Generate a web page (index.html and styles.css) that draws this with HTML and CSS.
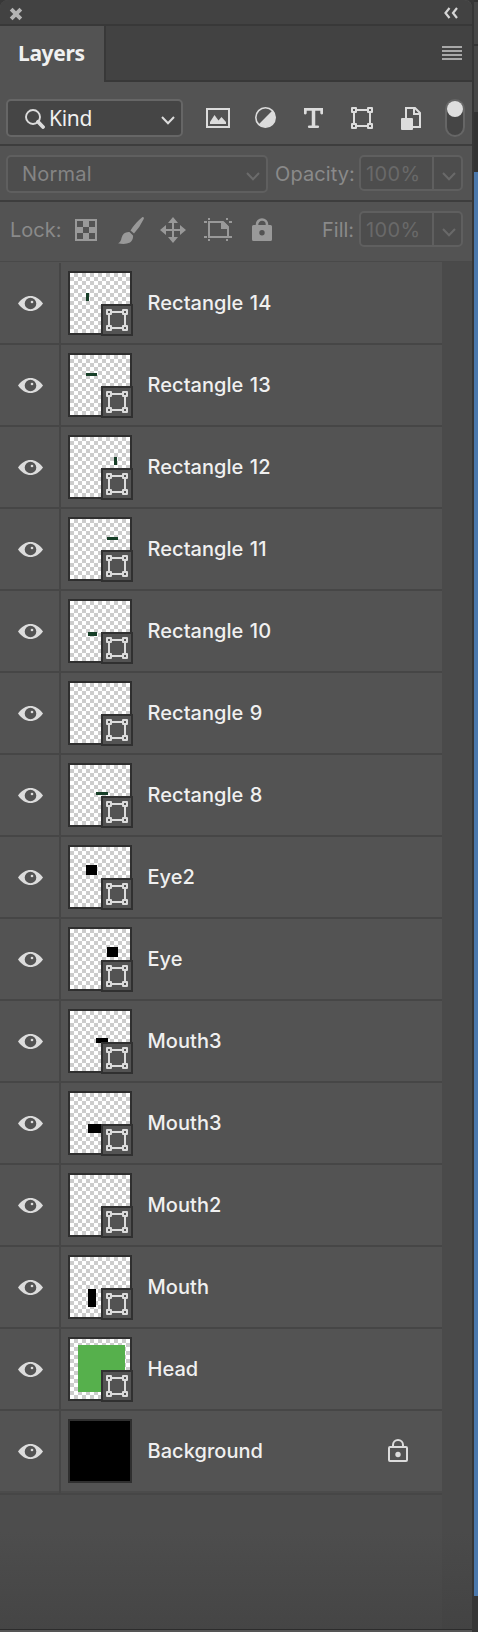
FILE: index.html
```
<!DOCTYPE html>
<html lang="en">
<head>
<meta charset="utf-8">
<title>Layers</title>
<link rel="stylesheet" href="styles.css">
</head>
<body>
<svg class="defs" aria-hidden="true">
  <symbol id="shape" viewBox="0 0 22 22"><path d="M5 3H17M5 19H17M3 5V17M19 5V17M1 1H5V5H1ZM17 1H21V5H17ZM1 17H5V21H1ZM17 17H21V21H17Z" fill="none" stroke="currentColor" stroke-width="2" stroke-linejoin="round"/></symbol>
  <symbol id="eye" viewBox="0 0 25 15"><path fill="currentColor" fill-rule="evenodd" d="M0 7.5C3.5 2.5 8 0 12.5 0S21.500 2.500 25 7.500C21.500 12.500 17 15 12.500 15S3.500 12.500 0 7.500ZM12.500 1.700A5.800 5.800 0 1 0 12.500 13.300A5.800 5.800 0 1 0 12.500 1.700Z"/><circle cx="14" cy="6" r="1.300" fill="currentColor"/></symbol>
  <symbol id="chevron" viewBox="0 0 14 9"><path d="M1 1L7 7.300L13 1" fill="none" stroke="currentColor" stroke-width="2"/></symbol>
</svg>
<div class="window">
<main class="panel">
  <header class="titlebar">
    <svg class="close" viewBox="0 0 13 13"><path d="M2 2L11 11M11 2L2 11" stroke="currentColor" stroke-width="3.600"/></svg>
    <svg class="collapse" viewBox="0 0 14 11"><path d="M5.500 .500L1.500 5.500L5.500 10.500M13 .500L9 5.500L13 10.500" fill="none" stroke="currentColor" stroke-width="2.200"/></svg>
  </header>
  <nav class="tabs">
    <div class="tab">Layers</div>
    <div class="menu"><i></i><i></i><i></i><i></i></div>
  </nav>
  <section class="filters">
    <div class="select kind">
      <svg class="search" viewBox="0 0 20 20"><circle cx="8" cy="8" r="7" fill="none" stroke="currentColor" stroke-width="1.900"/><path d="M13 12.800L18 18" stroke="currentColor" stroke-width="3.800" stroke-linecap="round"/></svg>
      <span>Kind</span>
      <svg class="chevron"><use href="#chevron"/></svg>
    </div>
    <svg class="f-image" viewBox="0 0 24 20"><rect x="1" y="1" width="22" height="18" fill="none" stroke="currentColor" stroke-width="2"/><path d="M4 16V14L8.500 7L12.500 12.500L15.500 9L20 14V16Z" fill="currentColor"/></svg>
    <svg class="f-adjust" viewBox="0 0 21 21"><circle cx="10.500" cy="10.500" r="9.700" fill="none" stroke="currentColor" stroke-width="1.600"/><path d="M17.700 3.300A10.200 10.200 0 0 1 3.300 17.700Z" fill="currentColor"/></svg>
    <svg class="f-type" viewBox="0 0 19 20"><path d="M1.300 5V1.400H17.700V5M9.500 1.500V18.600" fill="none" stroke="currentColor" stroke-width="2.800" stroke-linecap="round"/><path d="M9.500 1V18" stroke="currentColor" stroke-width="3.500"/><path d="M5.200 18.700H13.800" stroke="currentColor" stroke-width="2.600" stroke-linecap="round"/></svg>
    <svg class="f-shape"><use href="#shape"/></svg>
    <svg class="f-smart" viewBox="0 0 20 23"><path d="M5 12V1H14L19 6V20H11" fill="none" stroke="currentColor" stroke-width="2"/><path d="M13 1V7H19" fill="none" stroke="currentColor" stroke-width="2"/><rect y="11" width="12" height="12" rx="1" fill="currentColor"/></svg>
    <div class="toggle"><i></i></div>
  </section>
  <section class="blend">
    <div class="select normal"><span>Normal</span><svg class="chevron"><use href="#chevron"/></svg></div>
    <span class="label opacity">Opacity:</span>
    <div class="combo"><span>100%</span><b><svg class="chevron"><use href="#chevron"/></svg></b></div>
  </section>
  <section class="locks">
    <span class="label lock-label">Lock:</span>
    <svg class="l-pixels" viewBox="0 0 22 22"><path fill="currentColor" fill-rule="evenodd" d="M0 0H22V22H0ZM2 2V8H8V2ZM14 2V8H20V2ZM8 8V14H14V8ZM2 14V20H8V14ZM14 14V20H20V14Z"/></svg>
    <svg class="l-brush" viewBox="0 0 26 27"><path fill="currentColor" d="M24.500 0Q26.500 0 25.700 2Q22 10 16 16.500L12.500 13.500Q17 6 24.500 0ZM11.500 15L15 18.500Q15.500 23 12 25.500Q7 28 0 26.200Q3 25 3.500 21Q5 14.500 11.500 15Z"/></svg>
    <svg class="l-move" viewBox="0 0 26 26"><path d="M13 4V22M4 13H22" stroke="currentColor" stroke-width="2"/><path fill="currentColor" d="M13 0L18 6H8ZM13 26L18 20H8ZM0 13L6 8V18ZM26 13L20 8V18Z"/></svg>
    <svg class="l-board" viewBox="0 0 28 23"><path d="M5 4H19L24 9V19H5Z" fill="none" stroke="currentColor" stroke-width="2"/><path d="M17 4V11H24V8L20 4ZM4 0H6V2H4ZM22 0H24V2H22ZM4 21H6V23H4ZM22 21H24V23H22ZM0 3H3V5H0ZM25 3H28V5H25ZM0 18H3V20H0ZM25 18H28V20H25Z" fill="currentColor"/></svg>
    <svg class="l-all" viewBox="0 0 20 23"><path d="M5 8V6.500A5 5 0 0 1 15 6.500V8" fill="none" stroke="currentColor" stroke-width="2.600"/><path fill="currentColor" fill-rule="evenodd" d="M1.500 7H18.500Q20 7 20 8.500V21.500Q20 23 18.500 23H1.500Q0 23 0 21.500V8.500Q0 7 1.500 7ZM10 12A2.700 2.700 0 1 0 10 17.400A2.700 2.700 0 1 0 10 12Z"/></svg>
    <span class="label fill">Fill:</span>
    <div class="combo"><span>100%</span><b><svg class="chevron"><use href="#chevron"/></svg></b></div>
  </section>
  <section class="body">
    <ul class="list" id="list"></ul>
    <div class="gutter"></div>
  </section>
  <footer class="foot"></footer>
</main>
<aside class="edge"><i class="e1"></i><i class="e2"></i><i class="e3"></i><i class="canvas"></i><i class="e4"></i></aside>
</div>
<script src="layers.js"></script>
</body>
</html>
```
FILE: layers.js
```
// name, shape rectangle inside the 60px thumbnail [x, y, w, h], colour
const G = '#173f28', K = '#000';
const layers = [
  ['Rectangle 14', [16, 20, 3, 8], G],
  ['Rectangle 13', [16, 18, 11, 3], G],
  ['Rectangle 12', [44, 20, 3, 8], G],
  ['Rectangle 11', [37, 18, 11, 3], G],
  ['Rectangle 10', [18, 31, 9, 4], G],
  ['Rectangle 9'],
  ['Rectangle 8', [26, 27, 12, 3], G],
  ['Eye2', [16, 18, 11, 10], K],
  ['Eye', [37, 18, 11, 10], K],
  ['Mouth3', [26, 27, 12, 5], K],
  ['Mouth3', [18, 31, 16, 9], K],
  ['Mouth2'],
  ['Mouth', [18, 32, 8, 18], K],
  ['Head', [8, 6, 47, 47], '#56b04c'],
  ['Background', [0, 0, 60, 60], K, true]
];
const lock = '<svg class="locked" viewBox="0 0 20 23"><path d="M5 7V6A5 5 0 0 1 15 6V7" fill="none" stroke="currentColor" stroke-width="2"/><rect x="1" y="8" width="18" height="14" rx="1" fill="none" stroke="currentColor" stroke-width="2"/><circle cx="10" cy="15.500" r="2.700" fill="currentColor"/></svg>';
document.getElementById('list').innerHTML = layers.map(([name, r, color, locked]) => `
  <li class="row">
    <div class="visibility"><svg class="eye"><use href="#eye"/></svg></div>
    <div class="thumb">
      <svg class="art" viewBox="0 0 60 60">${r ? `<rect x="${r[0]}" y="${r[1]}" width="${r[2]}" height="${r[3]}" fill="${color}" shape-rendering="crispEdges"/>` : ''}</svg>
      ${locked ? '' : '<div class="badge"><svg><use href="#shape"/></svg></div>'}
    </div>
    <span class="name">${name}</span>${locked ? lock : ''}
  </li>`).join('');
```
FILE: styles.css
```
* { box-sizing: border-box; }
body { margin: 0; background: #383838; font: 20px/24px Inter, "Liberation Sans", sans-serif; color: #f0f0f0; }
svg { display: block; flex: none; }
.defs { position: absolute; width: 0; height: 0; }
.window { display: flex; width: 478px; height: 1632px; overflow: hidden; }
.panel { display: flex; flex-direction: column; width: 474px; border-right: 2px solid #363636; background: #535353; border-radius: 8px 8px 0 0; }

.titlebar { display: flex; justify-content: space-between; height: 26px; padding: 7px 14px 0 9px; background: #424242; border-bottom: 2px solid #383838; border-radius: 8px 8px 0 0; }
.close { width: 14px; height: 14px; color: #b4b4b4; }
.collapse { width: 14px; height: 12px; color: #d6d6d6; }

.tabs { display: flex; height: 56px; }
.tab { width: 104px; padding: 14px 0 0 18px; font: bold 21px/26px "Noto Sans", "Open Sans", sans-serif; letter-spacing: -.35px; }
.menu { flex: 1; display: flex; flex-direction: column; gap: 2px; align-items: flex-end; padding: 20px 10px 0 0; background: #424242; border-left: 2px solid #383838; border-bottom: 2px solid #383838; }
.menu i { width: 20px; height: 2px; background: #a8a8a8; }

.select, .combo { display: flex; border: 2px solid #5f5f5f; border-radius: 5px; background: #4d4d4d; }
.chevron { width: 14px; height: 9px; }

.filters { display: flex; height: 64px; padding: 17px 7px 0 6px; border-bottom: 2px solid #3d3d3d; color: #dcdcdc; }
.kind { width: 177px; height: 38px; padding: 5px 5px 0 17px; border-color: #666; background: #454545; font: 21px/24px "Noto Sans", "Open Sans", sans-serif; letter-spacing: -.3px; color: #f0f0f0; }
.search { width: 20px; height: 20px; margin: 3px 4px 0 0; color: #dcdcdc; }
.kind span { flex: 1; }
.kind .chevron { margin: 10px 1px 0 0; color: #dcdcdc; }
.f-image { width: 24px; height: 20px; margin: 9px 0 0 23px; }
.f-adjust { width: 21px; height: 21px; margin: 8px 0 0 25px; }
.f-type { width: 19px; height: 20px; margin: 9px 0 0 28px; }
.f-shape { width: 22px; height: 22px; margin: 8px 0 0 28px; }
.f-smart { width: 20px; height: 23px; margin: 8px 0 0 28px; }
.toggle { width: 20px; height: 38px; margin-left: 24px; padding: 0; border: 2px solid #666; border-radius: 10px; background: #454545; }
.toggle i { display: block; width: 16px; height: 16px; border-radius: 50%; background: #dedede; }

.blend { display: flex; height: 56px; padding: 9px 9px 0 6px; border-bottom: 2px solid #3d3d3d; color: #858585; }
.normal { width: 262px; height: 38px; padding: 5px 6px 0 14px; letter-spacing: .2px; }
.normal span { flex: 1; }
.normal .chevron { margin-top: 10px; color: #6b6b6b; }
.label { padding-top: 7px; color: #8a8a8a; white-space: nowrap; }
.opacity { width: 91px; padding-left: 7px; letter-spacing: .1px; }
.combo { width: 104px; height: 36px; color: #696969; }
.combo span { width: 71px; padding: 5px 0 0 5px; letter-spacing: .4px; }
.combo b { flex: 1; padding: 15px 0 0 8px; border-left: 2px solid #5f5f5f; }

.locks { display: flex; height: 60px; padding: 9px 9px 0 10px; border-bottom: 1px solid #494949; color: #999; }
.lock-label { width: 65px; }
.l-pixels { width: 22px; height: 22px; margin-top: 8px; }
.l-brush { width: 26px; height: 27px; margin: 6px 0 0 21px; }
.l-move { width: 26px; height: 26px; margin: 6px 0 0 16px; }
.l-board { width: 28px; height: 23px; margin: 7px 0 0 18px; }
.l-all { width: 20px; height: 23px; margin: 7px 0 0 20px; }
.fill { margin-left: 50px; width: 37px; }

.body { display: flex; height: 1367px; }
.list { width: 442px; margin: 0; padding: 1px 0 0; list-style: none; background: linear-gradient(#4d4d4d 0, #4d4d4d 1270px, #454545 100%); }
.row { display: flex; height: 82px; background: #535353; border-bottom: 2px solid #464646; }
.row:first-child { box-shadow: 0 -1px #535353; }
.row:last-child { height: 84px; box-shadow: inset 0 -2px #4b4b4b; }
.visibility { width: 61px; padding: 33px 0 0 18px; border-right: 2px solid #464646; }
.eye { width: 25px; height: 15px; color: #dcdcdc; }
.thumb { position: relative; width: 64px; height: 64px; margin: 8px 0 0 7px; border: 2px solid #2f2f2f; background: repeating-conic-gradient(#ccc 0 25%, #fff 0 50%) 0 0 / 8px 8px; }
.art { width: 60px; height: 60px; }
.badge { position: absolute; left: 31px; top: 31px; width: 32px; height: 32px; padding: 3px; border: 2px solid #303030; background: #535353; color: #dcdcdc; }
.badge svg { width: 22px; height: 22px; }
.name { flex: 1; padding: 28px 0 0 15.500px; font-weight: 500; letter-spacing: .05px; word-spacing: 1px; }
.locked { width: 20px; height: 23px; margin: 28px 34px 0 0; color: #dcdcdc; }
.gutter { flex: 1; background: linear-gradient(#4a4a4a 0, #4a4a4a 1270px, #434343 100%); }
.foot { height: 3px; border-top: 1px solid #2c2c2c; background: #555; }

.edge { display: flex; flex-direction: column; width: 4px; background: #343434; }
.edge i { display: block; }
.e1 { height: 42px; margin-top: 2px; background: #474747; }
.e2 { height: 66px; margin-top: 2px; background: #474747; }
.e3 { height: 60px; background: #333; }
.canvas { height: 1424px; background: #4b78ac; }
.e4 { height: 36px; background: #363636; }
```
